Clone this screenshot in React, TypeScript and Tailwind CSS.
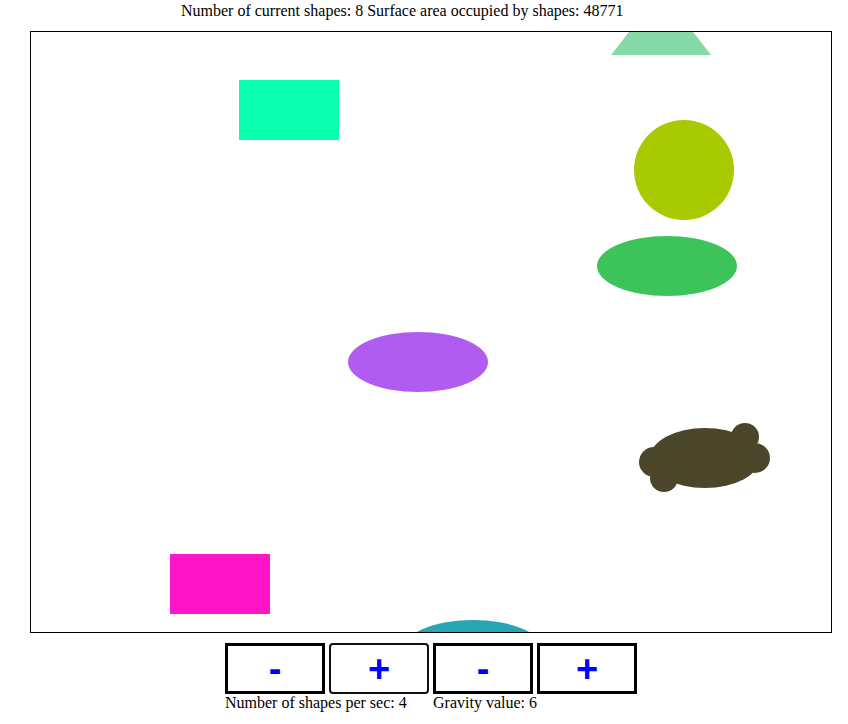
import React from "react";

export default function App() {
  const serif = { fontFamily: '"Liberation Serif", "Times New Roman", serif' };
  return (
    <div className="bg-white w-[848px] h-[724px] text-black text-[16px] leading-[18px] pt-[2px]" style={serif}>
      <div className="pl-[181px] whitespace-nowrap">
        Number of current shapes: 8 Surface area occupied by shapes: 48771
      </div>
      <div className="ml-[30px] mt-[11px] w-[802px] h-[602px] border border-black overflow-hidden">
        <svg width="800" height="600" viewBox="0 0 800 600" className="block">
          <polygon points="630,-41 580,23 680,23" fill="#86D9A8" />
          <rect x="208" y="48" width="100" height="60" fill="#0AFFAE" />
          <circle cx="653" cy="138" r="50" fill="#A8CA00" />
          <ellipse cx="636" cy="234" rx="70" ry="30" fill="#3CC45B" />
          <ellipse cx="387" cy="330" rx="70" ry="30" fill="#B15CF0" />
          <g fill="#4B462A">
            <ellipse cx="674" cy="426" rx="55" ry="30" />
            <circle cx="714" cy="405" r="14" />
            <circle cx="724" cy="426" r="15" />
            <circle cx="623" cy="430" r="15" />
            <circle cx="633" cy="446" r="14" />
          </g>
          <rect x="139" y="522" width="100" height="60" fill="#FF14C8" />
          <ellipse cx="442" cy="618" rx="70" ry="30" fill="#27A5B3" />
        </svg>
      </div>
      <div className="ml-[225px] mt-[10px] flex gap-[4px]">
        {["-", "+", "-", "+"].map((s, i) => (
          <button
            key={i}
            className={
              "w-[100px] h-[51px] bg-white flex items-center justify-center text-[#0000FF] font-bold text-[38px] leading-none " +
              (i === 1 ? "border-2 border-[#111] rounded-[4px]" : "border-[3px] border-black")
            }
            style={{ fontFamily: '"Liberation Sans", Arial, sans-serif' }}
          >
            {s}
          </button>
        ))}
      </div>
      <div className="ml-[225px] flex whitespace-nowrap">
        <span className="w-[208px]">Number of shapes per sec: 4</span>
        <span>Gravity value: 6</span>
      </div>
    </div>
  );
}
